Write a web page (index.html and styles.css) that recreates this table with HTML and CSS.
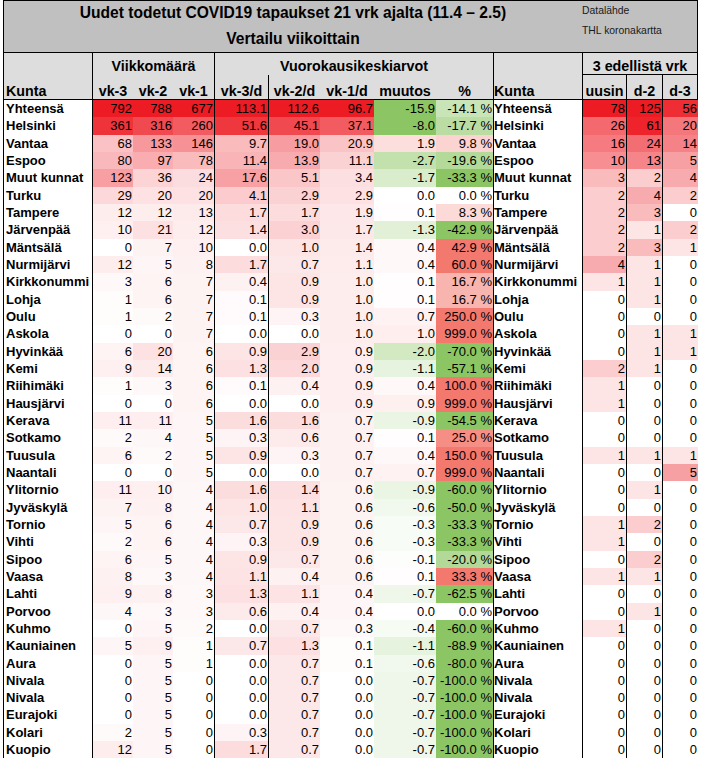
FILE: index.html
```html
<!DOCTYPE html>
<html lang="fi">
<head>
<meta charset="utf-8">
<title>Uudet todetut COVID19 tapaukset</title>
<link rel="stylesheet" href="styles.css">
</head>
<body>
<div class="sheet" id="sheet">
  <div class="title">
    <div class="title-main">Uudet todetut COVID19 tapaukset 21 vrk ajalta (11.4 – 2.5)<br>Vertailu viikoittain</div>
    <div class="source"><div>Datalähde</div><div>THL koronakartta</div></div>
  </div>
  <div class="h kunta1">Kunta</div>
  <div class="h grp g-vk">Viikkomäärä</div>
  <div class="h grp g-avg">Vuorokausikeskiarvot</div>
  <div class="h kunta2">Kunta</div>
  <div class="h grp g-3">3 edellistä vrk</div>
  <div class="h sub bl">vk-3</div>
  <div class="h sub">vk-2</div>
  <div class="h sub">vk-1</div>
  <div class="h sub bl">vk-3/d</div>
  <div class="h sub bl">vk-2/d</div>
  <div class="h sub">vk-1/d</div>
  <div class="h sub">muutos</div>
  <div class="h sub">%</div>
  <div class="h sub bl">uusin</div>
  <div class="h sub bl">d-2</div>
  <div class="h sub bl br">d-3</div>
</div>
<script src="script.js"></script>
</body>
</html>
```

FILE: styles.css
```css
* {
  box-sizing: border-box;
  margin: 0;
  padding: 0;
}

body {
  margin: 0;
  background: #ffffff;
  font-family: "Liberation Sans", Arial, sans-serif;
  color: #000000;
}

.sheet {
  display: grid;
  grid-template-columns: 88px 41px 40px 41px 54px 52px 54px 62px 57px 89px 44px 36px 36px;
  grid-template-rows: 52px 22px 25px;
  grid-auto-rows: 17.33px;
  width: 695px;
  margin-left: 3px;
  border-left: 1px solid #000;
  border-top: 1px solid #000;
}

.title {
  grid-column: 1 / -1;
  grid-row: 1;
  display: flex;
  background: #c0c0c0;
  border-bottom: 1px solid #000;
  border-right: 1px solid #000;
  overflow: hidden;
}

.title-main {
  flex: 0 0 578px;
  text-align: center;
  font-weight: bold;
  font-size: 15.6px;
  line-height: 25.5px;
  margin-top: -1px;
  white-space: nowrap;
}

.source {
  flex: 1;
  font-size: 10.4px;
  line-height: 20px;
  color: #1a1a1a;
  white-space: nowrap;
}

.h {
  background: #dddddd;
  font-weight: bold;
  font-size: 14.3px;
  display: flex;
  align-items: flex-end;
  justify-content: center;
  white-space: nowrap;
}

.kunta1 {
  grid-column: 1;
  grid-row: 2 / 4;
  justify-content: flex-start;
  padding-left: 2px;
  border-bottom: 1px solid #000;
}

.kunta2 {
  grid-column: 10;
  grid-row: 2 / 4;
  justify-content: flex-start;
  border-left: 1px solid #000;
  border-bottom: 1px solid #000;
}

.grp {
  grid-row: 2;
  border-left: 1px solid #000;
  padding-bottom: 1px;
}

.g-vk { grid-column: 2 / 5; }
.g-avg { grid-column: 5 / 10; }
.g-3 {
  grid-column: 11 / 14;
  border-bottom: 1px solid #000;
  border-right: 1px solid #000;
  padding-bottom: 0;
}

.sub {
  grid-row: 3;
  border-bottom: 1px solid #000;
}

.bl { border-left: 1px solid #000; }
.br { border-right: 1px solid #000; }

.c {
  font-size: 13px;
  line-height: 17.33px;
  white-space: nowrap;
  overflow: hidden;
}

.name {
  font-weight: bold;
  padding-left: 2px;
}

.name2 {
  font-weight: bold;
  padding-left: 0;
}

.n {
  text-align: right;
  padding-right: 1px;
}
```

FILE: script.js
```js
(function () {
  var data = [
    "Yhteensä|792|788|677|113.1|112.6|96.7|-15.9|-14.1|78|125|56",
    "Helsinki|361|316|260|51.6|45.1|37.1|-8.0|-17.7|26|61|20",
    "Vantaa|68|133|146|9.7|19.0|20.9|1.9|9.8|16|24|14",
    "Espoo|80|97|78|11.4|13.9|11.1|-2.7|-19.6|10|13|5",
    "Muut kunnat|123|36|24|17.6|5.1|3.4|-1.7|-33.3|3|2|4",
    "Turku|29|20|20|4.1|2.9|2.9|0.0|0.0|2|4|2",
    "Tampere|12|12|13|1.7|1.7|1.9|0.1|8.3|2|3|0",
    "Järvenpää|10|21|12|1.4|3.0|1.7|-1.3|-42.9|2|1|2",
    "Mäntsälä|0|7|10|0.0|1.0|1.4|0.4|42.9|2|3|1",
    "Nurmijärvi|12|5|8|1.7|0.7|1.1|0.4|60.0|4|1|0",
    "Kirkkonummi|3|6|7|0.4|0.9|1.0|0.1|16.7|1|1|0",
    "Lohja|1|6|7|0.1|0.9|1.0|0.1|16.7|0|1|0",
    "Oulu|1|2|7|0.1|0.3|1.0|0.7|250.0|0|0|0",
    "Askola|0|0|7|0.0|0.0|1.0|1.0|999.0|0|1|1",
    "Hyvinkää|6|20|6|0.9|2.9|0.9|-2.0|-70.0|0|1|1",
    "Kemi|9|14|6|1.3|2.0|0.9|-1.1|-57.1|2|1|0",
    "Riihimäki|1|3|6|0.1|0.4|0.9|0.4|100.0|1|0|0",
    "Hausjärvi|0|0|6|0.0|0.0|0.9|0.9|999.0|1|0|0",
    "Kerava|11|11|5|1.6|1.6|0.7|-0.9|-54.5|0|0|0",
    "Sotkamo|2|4|5|0.3|0.6|0.7|0.1|25.0|0|0|0",
    "Tuusula|6|2|5|0.9|0.3|0.7|0.4|150.0|1|1|1",
    "Naantali|0|0|5|0.0|0.0|0.7|0.7|999.0|0|0|5",
    "Ylitornio|11|10|4|1.6|1.4|0.6|-0.9|-60.0|0|1|0",
    "Jyväskylä|7|8|4|1.0|1.1|0.6|-0.6|-50.0|0|0|0",
    "Tornio|5|6|4|0.7|0.9|0.6|-0.3|-33.3|1|2|0",
    "Vihti|2|6|4|0.3|0.9|0.6|-0.3|-33.3|1|0|0",
    "Sipoo|6|5|4|0.9|0.7|0.6|-0.1|-20.0|0|2|0",
    "Vaasa|8|3|4|1.1|0.4|0.6|0.1|33.3|1|1|0",
    "Lahti|9|8|3|1.3|1.1|0.4|-0.7|-62.5|0|0|0",
    "Porvoo|4|3|3|0.6|0.4|0.4|0.0|0.0|0|1|0",
    "Kuhmo|0|5|2|0.0|0.7|0.3|-0.4|-60.0|1|0|0",
    "Kauniainen|5|9|1|0.7|1.3|0.1|-1.1|-88.9|0|0|0",
    "Aura|0|5|1|0.0|0.7|0.1|-0.6|-80.0|0|0|0",
    "Nivala|0|5|0|0.0|0.7|0.0|-0.7|-100.0|0|0|0",
    "Nivala|0|5|0|0.0|0.7|0.0|-0.7|-100.0|0|0|0",
    "Eurajoki|0|5|0|0.0|0.7|0.0|-0.7|-100.0|0|0|0",
    "Kolari|2|5|0|0.3|0.7|0.0|-0.7|-100.0|0|0|0",
    "Kuopio|12|5|0|1.7|0.7|0.0|-0.7|-100.0|0|0|0"
  ];

  var RED = [237, 28, 36];
  var SAL = [243, 120, 110];
  var GRN = [140, 198, 100];

  var A = [[0,0],[1,0.015],[3,0.03],[6,0.05],[12,0.08],[20,0.13],[29,0.17],[68,0.27],[97,0.36],[133,0.45],[146,0.48],[260,0.72],[316,0.8],[361,0.9],[677,1]];
  var B = [[0,0],[0.1,0.02],[0.4,0.06],[0.7,0.1],[1.0,0.12],[1.4,0.14],[2.0,0.17],[2.9,0.2],[4.1,0.23],[5.1,0.25],[9.7,0.3],[13.9,0.37],[19,0.43],[37.1,0.72],[45.1,0.8],[51.6,0.88],[96.7,1]];
  var B1 = [[0,0],[0.1,0.015],[0.4,0.04],[0.7,0.06],[1.0,0.08],[1.4,0.09],[2.0,0.11],[2.9,0.13],[3.4,0.14],[11.1,0.2],[20.9,0.26],[37.1,0.72],[96.7,1]];
  var C = [[0,0],[1,0.12],[2,0.22],[3,0.3],[4,0.37],[5,0.42],[10,0.5],[14,0.55],[16,0.58],[20,0.6],[26,0.66],[61,0.97],[78,1]];

  function mix(c, t) {
    t = Math.max(0, Math.min(1, t));
    return "rgb(" + c.map(function (x) { return Math.round(255 + (x - 255) * t); }).join(",") + ")";
  }
  function curve(a, v) {
    if (v <= a[0][0]) return a[0][1];
    for (var i = 1; i < a.length; i++) {
      if (v <= a[i][0]) {
        var x0 = a[i - 1][0], y0 = a[i - 1][1], x1 = a[i][0], y1 = a[i][1];
        return y0 + (y1 - y0) * (v - x0) / (x1 - x0);
      }
    }
    return a[a.length - 1][1];
  }

  var sheet = document.getElementById("sheet");
  function cell(text, cls, bg) {
    var d = document.createElement("div");
    d.className = "c " + cls;
    d.textContent = text;
    if (bg) d.style.background = bg;
    sheet.appendChild(d);
  }

  data.forEach(function (line) {
    var f = line.split("|");
    cell(f[0], "name");
    for (var i = 1; i <= 3; i++) {
      cell(f[i], "n" + (i === 1 ? " bl" : ""), mix(RED, curve(A, parseFloat(f[i]))));
    }
    for (var j = 4; j <= 6; j++) {
      var tb = curve(j === 6 ? B1 : B, parseFloat(f[j]));
      cell(f[j], "n" + (j <= 5 ? " bl" : ""), mix(RED, tb));
    }
    var m = parseFloat(f[7]);
    cell(f[7], "n", m < 0 ? mix(GRN, -m / 5.1) : mix(SAL, m / 8));
    var p = parseFloat(f[8]);
    cell(f[8] + " %", "n", p < 0 ? mix(GRN, -p / 30) : mix(SAL, p / 30));
    cell(f[0], "name2 bl");
    for (var k = 9; k <= 11; k++) {
      cell(f[k], "n bl", mix(RED, curve(C, parseFloat(f[k]))));
    }
  });
})();
```
